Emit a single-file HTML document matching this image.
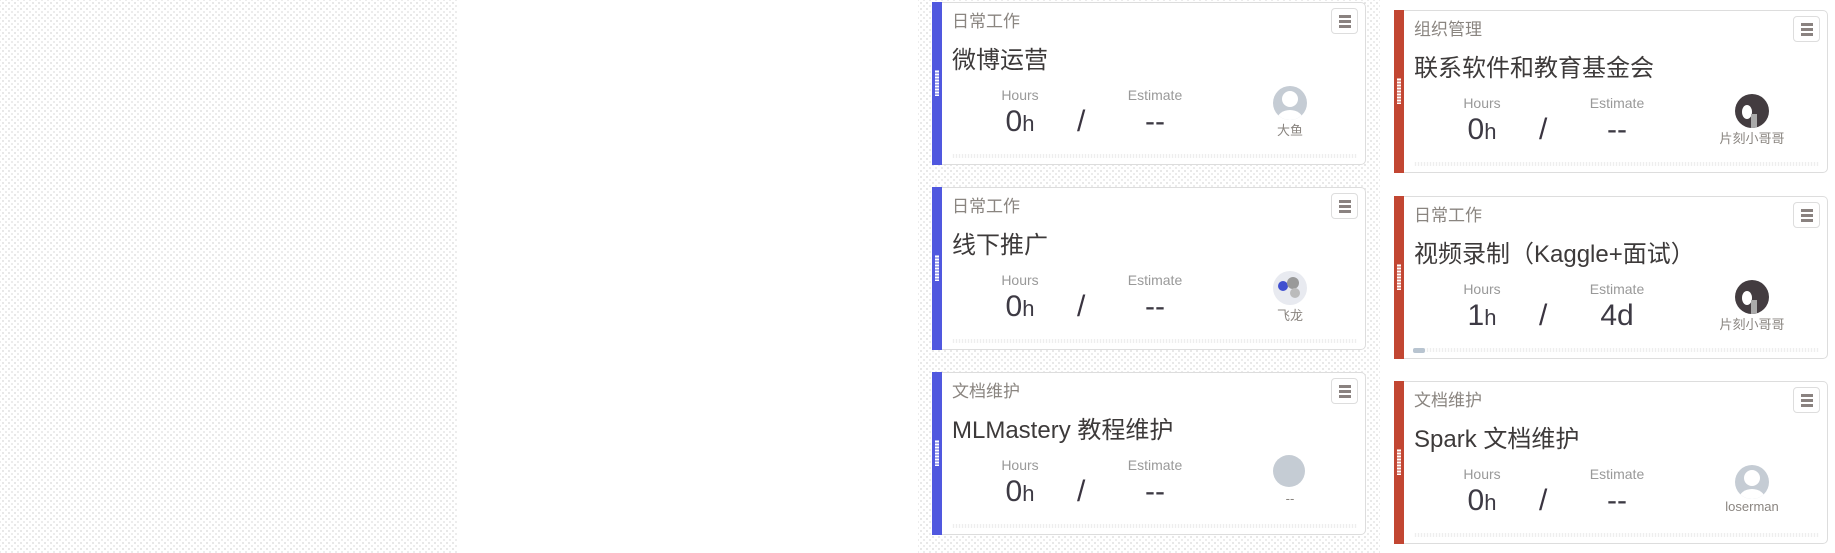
<!DOCTYPE html>
<html><head><meta charset="utf-8"><style>
body{margin:0;width:1835px;height:553px;background:#fff;position:relative;overflow:hidden;font-family:"Liberation Sans","Noto Sans CJK SC",sans-serif;}
.dots{position:absolute;background-color:#fff;background-image:radial-gradient(#e0e0e0 0.8px,transparent 1px),radial-gradient(#e6e6e6 0.8px,transparent 1px);background-size:6px 6px,6px 6px;background-position:0 0,3px 3px;}
.card{position:absolute;width:434px;height:163px;background:#fff;border:1px solid #ddd;border-left:none;border-radius:0 5px 5px 0;box-sizing:border-box;}
.bar{position:absolute;left:0;top:-1px;bottom:-1px;width:10px;}
.blue .bar{background:#5058df}.red .bar{background:#c24632}
.grip{position:absolute;left:3px;width:4px;top:68px;height:26px;background-image:radial-gradient(#fff 0.8px,transparent 1px);background-size:2px 3px;}
.cat{position:absolute;left:20px;top:4px;font-size:17px;color:#8a8580;}
.title{position:absolute;left:20px;top:37px;font-size:24px;color:#3d3a3a;white-space:nowrap;}
.menu{position:absolute;right:7px;top:5px;width:27px;height:26px;border:1px solid #ddd;border-radius:4px;box-sizing:border-box;}
.menu i{position:absolute;left:7px;width:12px;height:2.5px;background:#8a8280;}
.lbl{position:absolute;top:84px;font-size:14px;color:#999;width:80px;text-align:center;}
.val{position:absolute;top:102px;font-size:30px;color:#3d3a44;width:80px;text-align:center;}
.val small{font-size:22px;}
.sl{position:absolute;top:102px;left:145px;font-size:30px;color:#3a3440;}
.av{position:absolute;left:341px;top:83px;width:34px;height:34px;border-radius:50%;background:#c5ccd4;overflow:hidden;}
.name{position:absolute;top:117px;left:308px;width:100px;text-align:center;font-size:13px;color:#8a8580;}
.line{position:absolute;left:20px;right:8px;top:151px;height:4px;background-image:radial-gradient(#ddd 0.7px,transparent 0.9px);background-size:3px 2px;}
</style></head><body>
<div class="dots" style="left:0;top:0;width:458px;height:553px"></div>
<div class="dots" style="left:918px;top:0;width:462px;height:553px"></div>

<div class="card blue" style="left:932px;top:2px"><div class="bar"><div class="grip"></div></div>
<div class="cat">日常工作</div><div class="title">微博运营</div><div class="menu"><i style="top:6px"></i><i style="top:11px"></i><i style="top:16px"></i></div>
<div class="lbl" style="left:48px">Hours</div><div class="lbl" style="left:183px">Estimate</div>
<div class="val" style="left:48px">0<small>h</small></div><div class="sl">/</div><div class="val" style="left:183px">--</div>
<div class="av"><svg width="34" height="34"><circle cx="17" cy="13" r="8" fill="#fff"/><ellipse cx="17" cy="34" rx="13" ry="10" fill="#fff"/></svg></div><div class="name">大鱼</div><div class="line"></div></div>

<div class="card blue" style="left:932px;top:187px"><div class="bar"><div class="grip"></div></div>
<div class="cat">日常工作</div><div class="title">线下推广</div><div class="menu"><i style="top:6px"></i><i style="top:11px"></i><i style="top:16px"></i></div>
<div class="lbl" style="left:48px">Hours</div><div class="lbl" style="left:183px">Estimate</div>
<div class="val" style="left:48px">0<small>h</small></div><div class="sl">/</div><div class="val" style="left:183px">--</div>
<div class="av" style="background:#e8eaf0"><svg width="34" height="34"><circle cx="10" cy="15" r="5" fill="#4050d0"/><circle cx="20" cy="12" r="6" fill="#999"/><circle cx="22" cy="22" r="5" fill="#bbb"/></svg></div><div class="name">飞龙</div><div class="line"></div></div>

<div class="card blue" style="left:932px;top:372px"><div class="bar"><div class="grip"></div></div>
<div class="cat">文档维护</div><div class="title">MLMastery 教程维护</div><div class="menu"><i style="top:6px"></i><i style="top:11px"></i><i style="top:16px"></i></div>
<div class="lbl" style="left:48px">Hours</div><div class="lbl" style="left:183px">Estimate</div>
<div class="val" style="left:48px">0<small>h</small></div><div class="sl">/</div><div class="val" style="left:183px">--</div>
<div class="av" style="top:82px;width:32px;height:32px"></div><div class="name" style="top:118px">--</div><div class="line"></div></div>

<div class="card red" style="left:1394px;top:10px"><div class="bar"><div class="grip"></div></div>
<div class="cat">组织管理</div><div class="title">联系软件和教育基金会</div><div class="menu"><i style="top:6px"></i><i style="top:11px"></i><i style="top:16px"></i></div>
<div class="lbl" style="left:48px">Hours</div><div class="lbl" style="left:183px">Estimate</div>
<div class="val" style="left:48px">0<small>h</small></div><div class="sl">/</div><div class="val" style="left:183px">--</div>
<div class="av" style="background:#433c40"><svg width="34" height="34"><ellipse cx="12" cy="18" rx="5" ry="7" fill="#fff"/><rect x="16" y="20" width="6" height="14" fill="#aaa"/></svg></div><div class="name">片刻小哥哥</div><div class="line"></div></div>

<div class="card red" style="left:1394px;top:196px"><div class="bar"><div class="grip"></div></div>
<div class="cat">日常工作</div><div class="title">视频录制（Kaggle+面试）</div><div class="menu"><i style="top:6px"></i><i style="top:11px"></i><i style="top:16px"></i></div>
<div class="lbl" style="left:48px">Hours</div><div class="lbl" style="left:183px">Estimate</div>
<div class="val" style="left:48px">1<small>h</small></div><div class="sl">/</div><div class="val" style="left:183px">4d</div>
<div class="av" style="background:#433c40"><svg width="34" height="34"><ellipse cx="12" cy="18" rx="5" ry="7" fill="#fff"/><rect x="16" y="20" width="6" height="14" fill="#aaa"/></svg></div><div class="name">片刻小哥哥</div><div class="line"></div>
<div style="position:absolute;left:19px;top:151px;width:12px;height:5px;border-radius:2px;background:#b8c4d0"></div></div>

<div class="card red" style="left:1394px;top:381px"><div class="bar"><div class="grip"></div></div>
<div class="cat">文档维护</div><div class="title">Spark 文档维护</div><div class="menu"><i style="top:6px"></i><i style="top:11px"></i><i style="top:16px"></i></div>
<div class="lbl" style="left:48px">Hours</div><div class="lbl" style="left:183px">Estimate</div>
<div class="val" style="left:48px">0<small>h</small></div><div class="sl">/</div><div class="val" style="left:183px">--</div>
<div class="av"><svg width="34" height="34"><circle cx="17" cy="13" r="8" fill="#fff"/><ellipse cx="17" cy="34" rx="13" ry="10" fill="#fff"/></svg></div><div class="name">loserman</div><div class="line"></div></div>
</body></html>
